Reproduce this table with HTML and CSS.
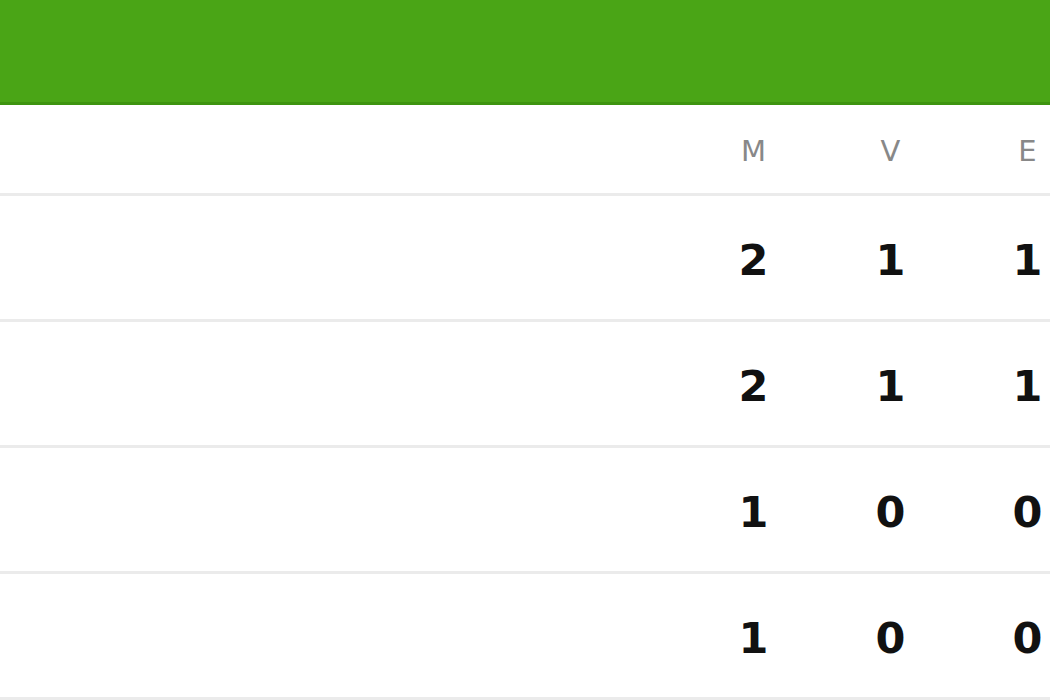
FILE: index.html
```html
<!DOCTYPE html>
<html>
<head>
<meta charset="utf-8">
<link rel="stylesheet" href="styles.css">
</head>
<body>
<div class="topbar"></div>
<div class="table">
  <div class="row head">
    <div class="name"></div>
    <div class="cell">M</div>
    <div class="cell">V</div>
    <div class="cell">E</div>
  </div>
  <div class="row">
    <div class="name"></div>
    <div class="cell">2</div>
    <div class="cell">1</div>
    <div class="cell">1</div>
  </div>
  <div class="row">
    <div class="name"></div>
    <div class="cell">2</div>
    <div class="cell">1</div>
    <div class="cell">1</div>
  </div>
  <div class="row">
    <div class="name"></div>
    <div class="cell">1</div>
    <div class="cell">0</div>
    <div class="cell">0</div>
  </div>
  <div class="row">
    <div class="name"></div>
    <div class="cell">1</div>
    <div class="cell">0</div>
    <div class="cell">0</div>
  </div>
</div>
</body>
</html>
```
FILE: styles.css
```css
html, body {
  margin: 0;
  padding: 0;
  background: #ffffff;
  overflow: hidden;
  width: 1050px;
  height: 700px;
}
.topbar {
  height: 102px;
  background: #4aa516;
  border-bottom: 3px solid #3e9410;
}
.table {
  width: 1050px;
  overflow: hidden;
}
.row {
  display: grid;
  grid-template-columns: 685px 137px 137px 137px;
  height: 123px;
  align-items: center;
  border-bottom: 3px solid #ebebeb;
  font-family: "DejaVu Sans", Verdana, sans-serif;
  font-weight: bold;
  font-size: 43px;
  color: #111;
  width: 1096px;
}
.row.head {
  height: 88px;
  font-weight: normal;
  font-size: 29px;
  color: #888;
}
.cell {
  text-align: center;
  line-height: 1;
}
.row .cell {
  padding-top: 6px;
}
.row.head .cell {
  padding-top: 4px;
}
```
